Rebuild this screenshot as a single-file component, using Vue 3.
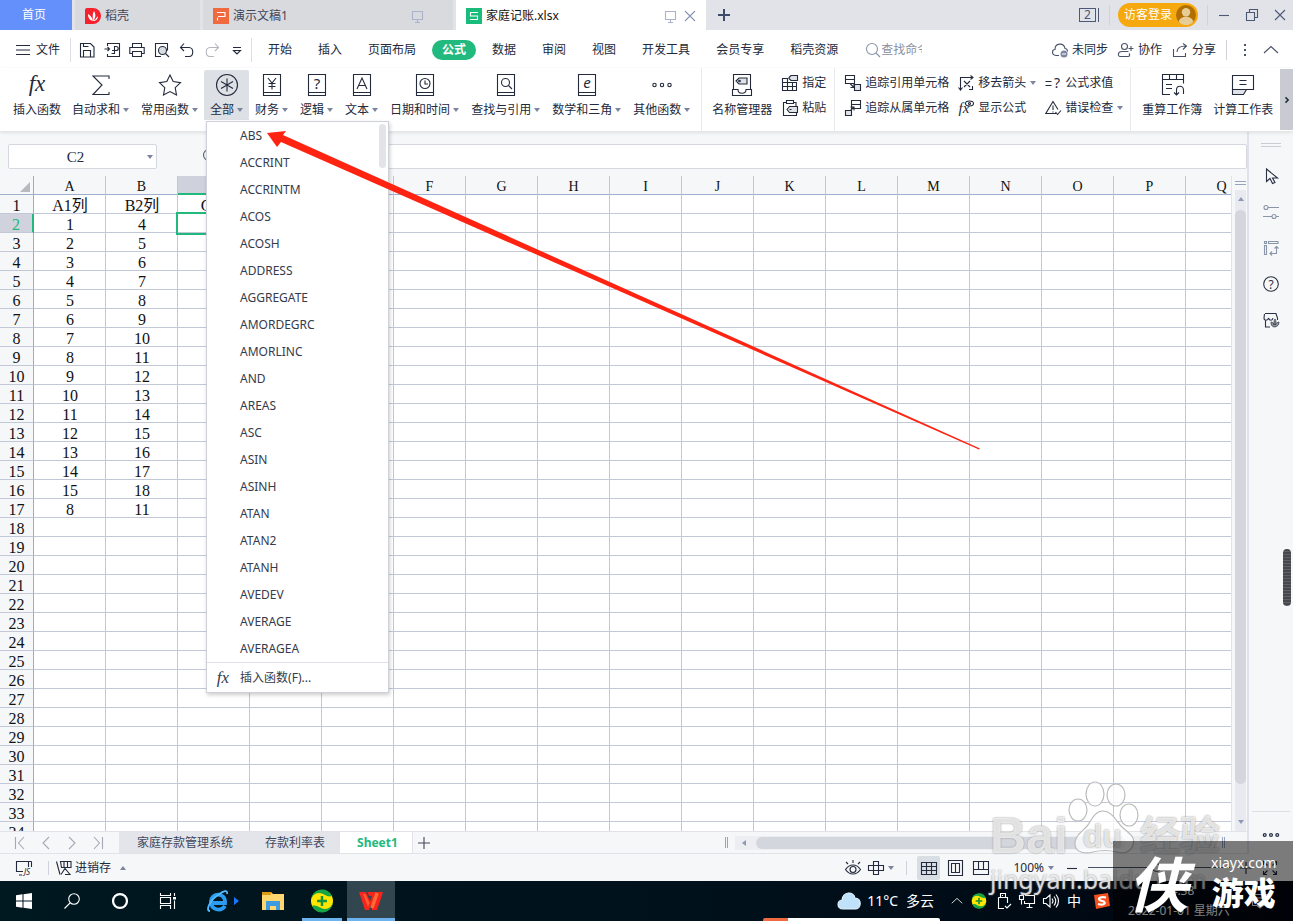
<script setup>
import { h, ref } from 'vue'

const cap = (x, y, s, t, extra = '') =>
  `<text x="${x}" y="${y}" font-size="${s}" text-anchor="middle" fill="currentColor" stroke="none" ${extra}>${t}</text>`
const book = '<path d="M3.5 1.5h17v21h-17zM3.5 19.5h17"/>'

const icons = {
  fx: [24, cap(12, 18, 23, 'fx', 'font-style="italic" font-family="Liberation Serif, serif"')],
  fxs: [16, cap(8, 13, 17, 'fx', 'font-style="italic" font-family="Liberation Serif, serif"')],
  sigma: [24, '<path d="M20 6V3H4l9 9-9 9.500h16V19"/>'],
  star: [24, '<path d="M12 2l3.200 6.600 7.300 1-5.300 5.100 1.300 7.200L12 18.500l-6.500 3.400 1.300-7.200L1.500 9.600l7.300-1z"/>'],
  all: [24, '<circle cx="12" cy="12" r="10.500"/><path d="M12 5.500v13M6 8.500l12 7M18 8.500l-12 7"/>'],
  money: [24, book + '<path d="M8 5l4 5 4-5M12 10v6.500M8.500 10.500h7M8.500 13.500h7"/>'],
  logic: [24, book + cap(12, 16, 15, '?')],
  text: [24, book + '<path d="M7 16l5-11 5 11M9 12.500h6"/>'],
  clock: [24, book + '<circle cx="12" cy="10.500" r="5"/><path d="M12 7.500v3.500h3"/>'],
  find: [24, book + '<circle cx="11.500" cy="9.500" r="4"/><path d="M14.500 12.500l3.500 3.500"/>'],
  math: [24, book + cap(12, 15, 15, 'e', 'font-style="italic"')],
  more: [24, '<circle cx="4.500" cy="12" r="1.700"/><circle cx="12" cy="12" r="1.700"/><circle cx="19.500" cy="12" r="1.700"/>'],
  names: [24, '<path d="M3.500 16V1.500h17V16M2.500 16.500H8c0 5 8 5 8 0h5.500v6h-19z"/><path fill="#dfe3e8" d="M6 8l3-3h8v6H9z"/><circle cx="9.500" cy="8" r=".8"/>'],
  assign: [16, '<path d="M6 3.500H.5v12h14V7M.5 7.500h14M.5 11.500h14M5.500 3.500v12M10.500 8v7.500"/><path fill="#dfe3e8" d="M7 2.500l2-2h6.500v5H9l-2-2z"/>'],
  paste: [16, '<path d="M4 2.500H1.500v13h13V13M12 2.500h2V6M4.500.5h7v3h-7z"/><path fill="#dfe3e8" d="M5 9.500l2.500-3h8v6h-8z"/><path d="M7.500 9.500h2"/>'],
  traceA: [16, '<path d="M.5.5h9v8h-9zM.5 4.500h9M5 8.500l4 4M9 9v3.500H5.500"/><path fill="#dfe3e8" d="M9.500 9.500h6v6h-6z"/>'],
  traceB: [16, '<path d="M6.500.5h9v8h-9zM6.500 4.500h9M4 12l5-5M5.500 7H9v3.500"/><path fill="#dfe3e8" d="M.5 10.500h6v5h-6z"/>'],
  removeArrow: [16, '<path d="M2.500 15V2.500H15M12.500.5l2.500 2-2.500 2M.5 12.500l2 2.500 2-2.500M6 6l6 6M12 6l-6 6M14.500 11v3.500H11"/>'],
  showF: [16, cap(6, 13, 15, 'fx', 'font-style="italic" font-family="Liberation Serif, serif"') + '<ellipse cx="11.500" cy="3.500" rx="4" ry="2.500"/><circle cx="11.500" cy="3.500" r="1"/>'],
  evalF: [16, '<path d="M.5 6.500h6M.5 10.500h6"/>' + cap(12, 13, 14, '?')],
  warn: [16, '<path d="M11 13.500H.8L8 1.500l5 8M8 5.500v4.500M8 11.500v1M10.500 12l2 2.500 3.500-4"/>'],
  recalcBook: [24, '<path d="M10 21.500H2.500v-20h21v9M2.500 6.500h21M9.500 1.500v5M16.500 1.500v5M6 11.500h6M6 15.500h6M23.500 21v-4c0-5-7-5-7 0v5M14 19.500l2.500 2.500 2.500-2.500"/>'],
  calcSheet: [24, '<path d="M1.500 2.500h21v14h-21zM8.500 7.500h7M8.500 11.500h7"/><path fill="#dfe3e8" d="M1.500 16.500h14l-3 5h-11z"/>'],
  save: [16, '<path d="M1.500 1.500h10l3.500 3.500v10h-13.500zM4.500 15V8.500h7V15M4.500 1.500v3h5"/>'],
  pdf: [16, '<path d="M3.500 4V1.500h12v13h-12V12M.5 7h5M3.500 5l2 2-2 2M7.500 11.500h3v-7h1.500c3 0 3 4 0 4H8"/>'],
  print: [16, '<path d="M3.500 5V1.500h9V5M3 11.500H.8V5.500h14.400v6H13M3.500 9.500h9v5h-9z"/>'],
  preview: [16, '<path d="M7 14.500H1.500v-13h12v7"/><circle cx="8.500" cy="8.500" r="4" fill="#d8dde4"/><path d="M11.500 11.500l3.500 3.500"/>'],
  undo: [16, '<path d="M5 1.500l-3.500 4 3.500 3.500M1.500 5.500H10c5 0 5 9 0 9H6"/>'],
  redo: [16, '<path d="M11 1.500l3.500 4L11 9M14.500 5.500H6c-5 0-5 9 0 9h4"/>'],
  qmore: [16, '<path d="M4 5.500h8M4.500 8.500L8 12l3.500-3.500z"/>'],
  search: [16, '<circle cx="7" cy="7" r="5.500"/><path d="M11 11l4 4"/>'],
  burger: [16, '<path d="M1 3.500h14M1 8h14M1 12.500h14"/>'],
  cloud: [16, '<path d="M7 13.500H4c-5-1-4-6-1-6 0-7 9-7 10-1 2 0 2.500 2 2.500 3"/><circle cx="12" cy="12" r="3.500" fill="#7c86a3" stroke="none"/><path d="M10 12h4" stroke="#fff"/>'],
  team: [16, '<circle cx="6.500" cy="4.500" r="3"/><path d="M10.500 9.500H4c-5 0-4 5-2 5h8c2 0 2-2 1-3M10.500 6.500h5M13 4v5"/>'],
  share: [16, '<path d="M1.500 7v7.500h12V11M5 10c0-4 3-6 9-6M11 1.500L14.500 4 11 7.500"/>'],
  dots: [16, '<path d="M8 2v2M8 7v2M8 12v2" stroke-width="2"/>'],
  up: [16, '<path d="M1 11l7-6.500 7 6.500"/>'],
  right: [16, '<path d="M6 4.500l3.500 3.500L6 11.500" stroke-width="2"/>'],
  plus: [16, '<path d="M8 2v12M2 8h12"/>'],
  screen: [16, '<path d="M3.500 3.500h10v8h-10zM8.500 11.500v3M6 14.500h5"/>'],
  close: [16, '<path d="M3 3l10 10M13 3L3 13"/>'],
  min: [16, '<path d="M3 8.500h10"/>'],
  restore: [16, '<path d="M2.500 5.500h8v8h-8zM5.500 5V2.500h8v8H11"/>'],
  docer: [16, '<path d="M8 0a8 8 0 010 16H0V2q0-2 2-2z" fill="#f5222d" stroke="none"/><path d="M8 13C4 12 3 9 3 6c2 1 4 3 5 7 0-4-1-6 1-10 2 3 2 7-1 10 2-1 3-3 5-5 0 3-2 5-5 5z" fill="#fff" stroke="none"/>'],
  ppt: [16, '<path d="M0 0h16v16H0z" fill="#f0693f" stroke="none"/><path d="M4.500 12.500v-3M4 4.500h8v4H5" stroke="#fff"/>'],
  et: [16, '<path d="M0 0h16v16H0z" fill="#1abc7b" stroke="none"/><path d="M12 4.500H4.500v3.500h7v3.500H4" stroke="#fff"/>'],
  first: [16, '<path d="M3.500 2v12M12 2L6.500 8l5.500 6"/>'],
  prev: [16, '<path d="M11 2L5 8l6 6"/>'],
  next: [16, '<path d="M5 2l6 6-6 6"/>'],
  last: [16, '<path d="M12.500 2v12M4 2l5.500 6L4 14"/>'],
  cursor: [16, '<path d="M3.500 1v12.500l3.500-3 2.500 5 2.500-1-2.500-4.500h5z"/>'],
  sliders: [16, '<circle cx="3" cy="3.500" r="2"/><path d="M5 3.500h11M0 12.500h9M13 12.500h3"/><circle cx="11" cy="12.500" r="2"/>'],
  pivot: [16, '<path d="M1.500 1.500h2v2h-2zM5.500 1.500h9.500v2H5.500zM1.500 5.500h2v9h-2zM13.500 7v6.500H7M11.500 8.500l2-2 2 2M9 11.500l-2 2 2 2"/>'],
  help: [16, '<circle cx="8" cy="8" r="7.300"/>' + cap(8, 12.500, 12, '?')],
  shop: [16, '<path d="M2.500 8v7H7M2 1.500h11l1.500 4.500v2M1.500 2L1 6c0 3 4 3 4.500 0 1 3 4 3 4.500 0"/><path d="M11 15c-3-1-3-3-3-5 2 0 3 2 3 3 0-2-.5-4 1-6 1.500 2 1 4 0 6 1-2 2-2.500 4-3 0 3-2 5-5 5z" fill="currentColor" fill-opacity=".5" stroke-width=".7"/>'],
  macro: [16, '<path d="M7 11.500H.5v-10h12M3 15h3M12.500 1.500V7M15.500 1.500V7M12.500 1.500h3"/>' + cap(11, 15, 8, 'JS', 'font-style="italic"')],
  stock: [16, '<path d="M.5 1.500l3.500 13M4.500 1.500H15v6H5.500zM8 1.500v6M11.500 1.500v6M5 14.500l4-6 2.500 3 2.500 3H9"/>'],
  eye: [16, '<path d="M.5 9.500c4-6 11-6 15 0-4 6-11 6-15 0zM8 0v3M1 2l2 2M15 2l-2 2"/><circle cx="8" cy="9.500" r="3"/>'],
  cross: [16, '<path d="M5.500 1.500h5v13h-5zM.5 5.500h15v5H.5z"/>'],
  vGrid: [16, '<path d="M.5 2.500h15v12H.5zM.5 6.500h15M.5 10.500h15M5.500 2.500v12M10.500 2.500v12"/>'],
  vPage: [16, '<path d="M1.500.5h14v15h-14zM4.500 3.500h8v9h-8zM8.500 3.500v9"/>'],
  vBreak: [16, '<path d="M.5 1.500h15v13H.5zM.5 9.500h10v-8M5.500 1.500v8M10.500 9.500h5"/>'],
  full: [16, '<path d="M1.500 5V1.500H5M11 1.500h3.500V5M14.500 11v3.500H11M5 14.500H1.500V11M1.500 1.500l4 4M14.500 1.500l-4 4M14.500 14.500l-4-4M1.500 14.500l4-4"/>'],
  win: [16, '<path d="M0 2.300l6.500-1v6.200H0zM7.500 1.200L16 0v7.500H7.500zM0 8.500h6.500v6.200l-6.500-1zM7.500 8.500H16V16l-8.500-1.200z" fill="#fff" stroke="none"/>'],
  tSearch: [16, '<circle cx="10" cy="6" r="5.300"/><path d="M6 10L.5 15.500"/>'],
  tRing: [16, '<circle cx="8" cy="8" r="6.200" stroke-width="2"/>'],
  tTask: [16, '<path d="M.5 0v2.500h10V0M.5 4.500h10v6H.5zM.5 16v-3.500h10V16M14.500 0v3M14.500 7.500V16"/><path d="M13 4h3v2.500h-3z" fill="#fff" stroke="none"/>'],
  ie: [24, '<path d="M20 17c-4 6-14 4-14-4 0-10 15-10 14 1H8" stroke="#2b9cf2" stroke-width="3.800"/><path d="M5 22c-5 0 0-11 8-16 5-4 10-6 9-1" stroke="#55bcff" stroke-width="1.800"/>'],
  folder: [24, '<path d="M1 3h9l2 2h11v16H1z" fill="#ffd76e" stroke="none"/><path d="M1 3h9v3H1z" fill="#dc9b12" stroke="none"/><path d="M5 21v-9h14v9h-4v-4H9v4z" fill="#3f9be0" stroke="none"/>'],
  safe: [24, '<circle cx="12" cy="12" r="11" fill="#ffe600" stroke="none"/><path d="M1 11A11 11 0 0122 7C17 9 14 4 9 4 5 4 2 7 1 11zM23 13A11 11 0 012 17C7 15 10 20 15 20 19 20 22 17 23 13z" fill="#15a547" stroke="none"/><path d="M12 7v10M7 12h10" stroke="#159339" stroke-width="2.500"/>'],
  wps: [24, '<path d="M0 3h7l4 9 2-5h-3l-1.500-4H24l-6 18h-5l-1-5-2 5H6z" fill="#f5251c" stroke="none"/><path d="M18 4l-5 15" stroke="#ff6a35" stroke-width="3.500"/><path d="M4 5h2.500l4 9-1.500 4z" fill="#ff5a30" stroke="none"/>'],
  weather: [24, '<path d="M6 20c-7 0-6-9-1-9 1-9 12-9 13-2 7 0 7 11 0 11z" fill="#bfe2fa" stroke="#e8f6ff"/>'],
  usb: [16, '<path d="M5.500.5h5v4h-5zM3.500 4.500h9V10M9 15.500H3.500v-11M7.500 2v1M10 13l2 2 4-4"/>'],
  net: [16, '<path d="M6 2.500h9.500v8h-10V8M10.500 10.500v4M7.500 14.500h6M.5 2.500h4v4h-4zM2.500 6.500v5"/>'],
  vol: [16, '<path d="M.5 5.500h2.500l4-3.500v12l-4-3.500H.5zM9 5.500q2 2.500 0 5M11 3.500q3.500 4.500 0 9M13 1.500q5 6.500 0 13"/>'],
  sogou: [16, '<path d="M0 2L14 0l2 13-14 3z" fill="#f4511e" stroke="none"/><path d="M12 4.500C4 3 3 7 8 8s3 5-4 3" stroke="#fff" stroke-width="2.200"/>'],
  notice: [16, '<path d="M.5 1.500h15v11H11L8 15l-3-2.500H.5zM3.500 5h9M3.500 8h9"/>'],
  user: [18, '<circle cx="9" cy="9" r="9" fill="#b06f00" stroke="none"/><circle cx="9" cy="6.500" r="3.800" fill="#e8cc96" stroke="none"/><path d="M2.500 15c1-6 12-6 13 0-3 4-10 4-13 0z" fill="#e8cc96" stroke="none"/>'],
}

const Ico = (props) =>
  h('svg', {
    viewBox: `0 0 ${icons[props.n][0]} ${icons[props.n][0]}`,
    width: props.s || icons[props.n][0],
    height: props.s || icons[props.n][0],
    fill: 'none',
    stroke: 'currentColor',
    'stroke-width': 1.1,
    'aria-hidden': 'true',
    innerHTML: icons[props.n][1],
  })
Ico.props = ['n', 's']

const quick = ['save', 'pdf', 'print', 'preview', 'undo', 'redo', 'qmore']
const menus = ['开始', '插入', '页面布局', '公式', '数据', '审阅', '视图', '开发工具', '会员专享', '稻壳资源']
const funcsBefore = [['fx', '插入函数', false], ['sigma', '自动求和', true], ['star', '常用函数', true]]
const funcsAfter = [
  ['money', '财务'], ['logic', '逻辑'], ['text', '文本'], ['clock', '日期和时间'],
  ['find', '查找与引用'], ['math', '数学和三角'], ['more', '其他函数'],
]
const functions = [
  'ABS', 'ACCRINT', 'ACCRINTM', 'ACOS', 'ACOSH', 'ADDRESS', 'AGGREGATE', 'AMORDEGRC', 'AMORLINC', 'AND',
  'AREAS', 'ASC', 'ASIN', 'ASINH', 'ATAN', 'ATAN2', 'ATANH', 'AVEDEV', 'AVERAGE', 'AVERAGEA',
]
const columns = 'ABCDEFGHIJKLMNOPQ'.split('')
const colA = ['A1列', 1, 2, 3, 4, 5, 6, 7, 8, 9, 10, 11, 12, 13, 14, 15, 8]
const colB = ['B2列', 4, 5, 6, 7, 8, 9, 10, 11, 12, 13, 14, 15, 16, 17, 18, 11]
const cell = (r, c) => (c === 'A' ? colA[r - 1] : c === 'B' ? colB[r - 1] : c === 'C' && r === 1 ? 'C列' : '')
const zoom = ref(48)
</script>

<template>
  <div class="app">
    <header class="title">
      <button class="home">首页</button>
      <button class="doc docer"><Ico n="docer" />稻壳</button>
      <button class="doc"><Ico n="ppt" />演示文稿1<Ico class="tail" n="screen" /></button>
      <div class="doc active"><Ico n="et" /><span>家庭记账.xlsx</span><Ico class="tail" n="screen" />
        <button aria-label="关闭标签"><Ico n="close" /></button></div>
      <button class="newtab" aria-label="新建"><Ico n="plus" /></button>
      <div class="winctl">
        <button class="count">2</button><i class="bar"></i>
        <button class="login">访客登录<Ico n="user" s="20" /></button><i class="bar"></i>
        <button aria-label="最小化"><Ico n="min" /></button>
        <button aria-label="还原"><Ico n="restore" /></button>
        <button aria-label="关闭"><Ico n="close" /></button>
      </div>
    </header>

    <nav class="menu">
      <button class="file"><Ico n="burger" />文件</button>
      <div class="quick">
        <button v-for="q in quick" :key="q" :class="q" :aria-label="q"><Ico :n="q" /></button>
      </div>
      <div class="menus">
        <button v-for="m in menus" :key="m" :class="{ on: m === '公式' }">{{ m }}</button>
      </div>
      <label class="find"><Ico n="search" /><input type="text" placeholder="查找命令" aria-label="查找命令" /></label>
      <div class="share">
        <button><Ico n="cloud" />未同步</button>
        <button><Ico n="team" />协作</button>
        <button><Ico n="share" />分享</button>
        <i class="bar"></i>
        <button aria-label="更多"><Ico n="dots" /></button>
        <button aria-label="收起"><Ico n="up" /></button>
      </div>
    </nav>

    <section class="ribbon">
      <div class="group funcs">
        <button v-for="f in funcsBefore" :key="f[1]" class="big"><Ico :n="f[0]" />
          <span>{{ f[1] }}<i v-if="f[2]" class="caret"></i></span></button>
        <div class="anchor">
          <button class="big pressed"><Ico n="all" /><span>全部<i class="caret"></i></span></button>
          <div class="dropdown">
            <ul>
              <li v-for="f in functions" :key="f"><button>{{ f }}</button></li>
            </ul>
            <button class="insert"><Ico n="fxs" />插入函数(F)...</button>
            <i class="dthumb"></i>
          </div>
        </div>
        <button v-for="f in funcsAfter" :key="f[1]" class="big"><Ico :n="f[0]" />
          <span>{{ f[1] }}<i class="caret"></i></span></button>
      </div>
      <div class="group manage">
        <button class="big"><Ico n="names" /><span>名称管理器</span></button>
        <div class="pair">
          <button><Ico n="assign" />指定</button>
          <button><Ico n="paste" />粘贴</button>
        </div>
      </div>
      <div class="group trace">
        <div class="pair">
          <button><Ico n="traceA" />追踪引用单元格</button>
          <button><Ico n="traceB" />追踪从属单元格</button>
        </div>
        <div class="pair">
          <button><Ico n="removeArrow" />移去箭头<i class="caret"></i></button>
          <button><Ico n="showF" />显示公式</button>
        </div>
        <div class="pair">
          <button><Ico n="evalF" />公式求值</button>
          <button><Ico n="warn" />错误检查<i class="caret"></i></button>
        </div>
      </div>
      <div class="group calc">
        <button class="big"><Ico n="recalcBook" /><span>重算工作簿</span></button>
        <button class="big"><Ico n="calcSheet" /><span>计算工作表</span></button>
      </div>
      <button class="scroller" aria-label="向右滚动"><Ico n="right" s="12" /></button>
    </section>

    <main class="work">
      <div class="book">
        <div class="fbar">
          <div class="namebox"><input type="text" value="C2" aria-label="名称框" /><i class="caret"></i></div>
          <Ico class="fzoom" n="search" />
          <input class="formula" type="text" aria-label="编辑栏" />
        </div>
        <div class="sheet">
          <div class="grid">
            <table>
              <thead>
                <tr>
                  <th class="corner"><i></i></th>
                  <th v-for="c in columns" :key="c" :class="{ sel: c === 'C' }">{{ c }}</th>
                </tr>
              </thead>
              <tbody>
                <tr v-for="r in 34" :key="r">
                  <th :class="{ rsel: r === 2 }">{{ r }}</th>
                  <td v-for="c in columns" :key="c" :class="{ cur: r === 2 && c === 'C' }">{{ cell(r, c) }}</td>
                </tr>
              </tbody>
            </table>
          </div>
          <div class="vscroll">
            <i class="split"></i>
            <div class="track"><i class="tri up"></i><i class="thumb"></i><i class="tri down"></i></div>
          </div>
        </div>
        <div class="tabs">
          <div class="navs">
            <button aria-label="第一张"><Ico n="first" /></button>
            <button aria-label="上一张"><Ico n="prev" /></button>
            <button aria-label="下一张"><Ico n="next" /></button>
            <button aria-label="最后一张"><Ico n="last" /></button>
          </div>
          <button class="stab">家庭存款管理系统</button>
          <button class="stab second">存款利率表</button>
          <button class="stab on">Sheet1</button>
          <button class="add" aria-label="新建工作表"><Ico n="plus" /></button>
          <div class="hscroll"><i class="vsplit"></i><div class="htrack"><i class="tri left"></i><i class="hthumb"></i></div><i class="vsplit"></i></div>
        </div>
      </div>
      <aside class="side">
        <i class="grip"></i>
        <button aria-label="选择"><Ico n="cursor" /></button>
        <button class="dim" aria-label="属性"><Ico n="sliders" /></button>
        <button class="dim" aria-label="透视表"><Ico n="pivot" /></button>
        <button aria-label="帮助"><Ico n="help" /></button>
        <button aria-label="稻壳"><Ico n="shop" /></button>
        <button class="last" aria-label="更多"><Ico n="more" s="20" /></button>
        <i class="pagebar"></i>
      </aside>
    </main>

    <div class="status">
      <button class="js" aria-label="宏"><Ico n="macro" /></button><i class="bar"></i>
      <button class="stock"><Ico n="stock" />进销存<i class="caret flip"></i></button>
      <div class="views">
        <button aria-label="护眼"><Ico n="eye" /></button>
        <button class="crossb" aria-label="阅读模式"><Ico n="cross" /><i class="caret"></i></button>
        <i class="bar"></i>
        <button class="view on" aria-label="普通"><Ico n="vGrid" /></button>
        <button class="view" aria-label="页面"><Ico n="vPage" /></button>
        <button class="view" aria-label="分页"><Ico n="vBreak" /></button>
        <button class="pct">100%<i class="caret"></i></button>
        <button aria-label="缩小"><Ico n="min" /></button>
        <input v-model="zoom" class="range" type="range" min="0" max="100" aria-label="缩放" />
        <button aria-label="放大"><Ico n="plus" /></button>
        <button class="full" aria-label="全屏"><Ico n="full" /></button>
      </div>
    </div>

    <footer class="taskbar">
      <button aria-label="开始"><Ico n="win" /></button>
      <button aria-label="搜索"><Ico n="tSearch" /></button>
      <button aria-label="Cortana"><Ico n="tRing" s="18" /></button>
      <button aria-label="任务视图"><Ico n="tTask" /></button>
      <button class="ie" aria-label="浏览器"><Ico n="ie" /><i class="bluetri"></i></button>
      <button aria-label="文件夹"><Ico n="folder" /></button>
      <button class="run" aria-label="安全卫士"><Ico n="safe" /></button>
      <button class="run cur" aria-label="WPS"><Ico n="wps" /></button>
      <div class="tray">
        <Ico n="weather" /><span class="temp">11°C</span><span class="sky">多云</span>
        <Ico n="up" s="12" /><Ico n="safe" s="16" /><Ico n="usb" /><Ico n="net" /><Ico n="vol" />
        <span class="ime">中</span><Ico n="sogou" />
        <div class="clock"><span>14:38</span><span>2022-01-01 星期六</span></div>
        <Ico class="notice" n="notice" />
      </div>
      <i class="toast"></i>
    </footer>

    <svg class="arrow" viewBox="0 0 720 320" width="720" height="320" aria-hidden="true">
      <path d="M2 3L21 1L18 5L715 318.500L714 319.500L16 12L12 17z" fill="#ff2312" />
    </svg>

    <div class="baidu">
      <svg viewBox="0 0 76 76" width="76" height="76" aria-hidden="true">
        <g fill="#fff" fill-opacity=".75" stroke="#bbb" stroke-width="1.200">
          <ellipse cx="26" cy="13" rx="9" ry="12" /><ellipse cx="47" cy="14" rx="9" ry="11" />
          <ellipse cx="9" cy="29" rx="9" ry="11" /><ellipse cx="60" cy="34" rx="9" ry="11" />
          <path d="M34 30c8 0 12 8 18 15 7 7 15 10 12 19-3 8-10 9-16 7-8-2-16-2-24 0-7 2-17 1-18-7-1-9 7-13 13-20 4-6 7-14 15-14z" />
        </g>
      </svg>
      <div class="brand"><b>Bai</b><b class="du">du</b><b class="exp">经验</b></div>
      <div class="url">jingyan.baidu.com</div>
    </div>
    <div class="xia">
      <b class="xa">侠</b>
      <div class="xb"><span>xiayx.com</span><b>游戏</b></div>
    </div>
  </div>
</template>

<style>
body { overflow: hidden; }
</style>

<style scoped>
* { box-sizing: border-box; }
.app {
  position: relative; display: flex; flex-direction: column; height: 100vh; overflow: hidden;
  font-family: "Noto Sans", "Noto Sans CJK SC", sans-serif; font-size: 12px; line-height: 18px; color: #232a3b; background: #f6f7f9;
}
button { font: inherit; color: inherit; background: none; border: 0; padding: 0; display: flex; align-items: center; white-space: nowrap; flex: none; }
input { font: inherit; color: inherit; outline: 0; }
svg { flex: none; display: block; overflow: visible; }
ul { list-style: none; margin: 0; padding: 0; }
.bar { width: 1px; height: 20px; background: #cfd2da; flex: none; }
.caret { display: inline-block; flex: none; border: 3px solid transparent; border-top: 4px solid #7b859e; border-bottom: 0; }
.caret.flip { border-top: 0; border-bottom: 4px solid #7b859e; }

.title { display: flex; height: 30px; flex: none; background: #e2e3e8; gap: 3px; color: #3f465a; }
.home { width: 72px; justify-content: center; padding-right: 4px; background: #6390fb; color: #fff; }
.doc { display: flex; align-items: center; width: 250px; padding: 1px 8px 0 10px; gap: 4px; background: #d9dade; }
.doc.docer { width: 125px; }
.doc .tail { margin-left: auto; color: #aab2cc; }
.doc:nth-child(3) .tail { margin-right: 20px; }
.doc.active { background: #fff; color: #111; gap: 4px; }
.doc.active button { color: #8a94b0; }
.newtab { margin-left: 7px; color: #3d4a6a; }
.newtab svg { stroke-width: 2; }
.winctl { display: flex; align-items: center; margin-left: auto; padding-right: 5px; color: #4b5876; }
.winctl > button { margin-right: 12px; }
.winctl > button:last-child { margin: 0; }
.winctl .count { width: 17px; height: 14px; justify-content: center; border: 1px solid #4b5876; box-shadow: 2px 0 #e2e3e8, 3px 0 #4b5876; margin-right: 13px; }
.winctl .login { height: 24px; margin: 0 9px 0 8px; padding: 0 2px 0 6px; gap: 4px; border-radius: 12px; background: #f6a90f; color: #fff; }
.winctl .bar + button { margin-left: 8px; }

.menu { display: flex; align-items: center; height: 38px; padding-top: 1px; flex: none; background: #fff; }
.file { width: 71px; height: 24px; padding-left: 15px; gap: 5px; border-right: 1px solid #dcdee4; }
.quick { display: flex; gap: 9px; padding: 0 6px 0 8px; height: 24px; border-right: 1px solid #dcdee4; }
.quick .redo { color: #b3b6bd; }
.menus { display: flex; padding-left: 3px; }
.menus button { padding: 0 13px; height: 20px; }
.menus .on { padding: 0 10px; margin: 0 3px; border-radius: 10px; background: #21b97d; color: #fff; font-weight: 700; }
.find { display: flex; align-items: center; margin-left: 14px; color: #8a94a8; }
.find input { width: 41px; border: 0; padding: 0; background: none; }
.find input::placeholder { color: #8a909e; opacity: 1; }
.share { display: flex; align-items: center; margin-left: auto; padding-right: 14px; gap: 10px; }
.share button { gap: 4px; }
.share svg { color: #4a5267; }

.ribbon { display: flex; height: 64px; flex: none; background: #fff; border-bottom: 1px solid #e6e7ea; box-shadow: 0 1px 3px #00000018; position: relative; z-index: 3; }
.group { display: flex; align-items: flex-start; padding: 2px 5px 0; border-right: 1px solid #e9eaee; flex: none; }
.funcs { padding-left: 7px; }
.manage { padding: 2px 4px 0; }
.big { flex-direction: column; padding: 3px 6px 0; height: 50px; gap: 4px; }
.funcs > .big:first-child { padding-left: 6px; padding-right: 5px; }
.big span { display: flex; align-items: center; gap: 3px; }
.big.pressed { background: #dde1e6; border-radius: 2px 2px 0 0; }
.pair { display: flex; flex-direction: column; padding: 0 4px; }
.pair button { height: 26px; gap: 4px; }
.pair button:first-child { height: 25px; }
.trace { padding-left: 6px; padding-right: 2px; }
.trace .pair { padding: 0 5px 0 4px; }
.calc { padding-right: 0; border-right: 0; }
.calc .big { padding-right: 5px; }
.scroller { margin-left: auto; width: 13px; height: 61px; margin-top: 1px; justify-content: center; background: #c9cbd2; }

.anchor { position: relative; }
.dropdown { position: absolute; top: 51px; left: 2px; width: 183px; background: #fff; border: 1px solid #ced1d8; box-shadow: 1px 2px 4px #0003; z-index: 5; color: #343b4c; }
.dropdown ul { border-bottom: 1px solid #dfe1e6; }
.dropdown li button { height: 27px; width: 100%; padding-left: 33px; }
.insert { height: 29px; width: 100%; padding-left: 8px; gap: 9px; }
.dthumb { position: absolute; top: 2px; right: 2px; width: 7px; height: 44px; border-radius: 4px; background: #e3e4e8; }

.work { display: flex; flex: 1; min-height: 0; }
.book { flex: 1; min-width: 0; display: flex; flex-direction: column; }
.fbar { display: flex; align-items: center; height: 44px; flex: none; padding: 4px 0 0 8px; }
.namebox { display: flex; align-items: center; width: 149px; height: 25px; padding: 2px 3px 0 0; background: #fff; border: 1px solid #d5d8de; border-radius: 2px; }
.namebox input { width: 100%; min-width: 0; border: 0; padding: 0 5px 0 0; background: none; text-align: center; font: 15px "Liberation Serif", serif; }
.fzoom { margin-left: 45px; color: #5b6272; }
.formula { flex: 1; margin-left: 30px; height: 25px; border: 1px solid #d5d8de; border-radius: 2px; background: #fff; }
.sheet { display: flex; flex: 1; min-height: 0; }
.grid { flex: 1; min-width: 0; overflow: hidden; }
table { border-collapse: separate; border-spacing: 0; table-layout: fixed; width: 1258px; font: 16px/15px "Liberation Serif", "Noto Sans CJK SC", serif; color: #111; }
th, td { padding: 3px 0 0; height: 19px; font-weight: 400; text-align: center; overflow: hidden; white-space: nowrap; border-right: 1px solid #c3c8d9; border-bottom: 1px solid #c3c8d9; }
td { background: #fff; width: 72px; padding-left: 1px; }
tr > th:first-child { width: 34px; border-right-color: #9fabc9; background: #f6f7f9; }
thead th { height: 19px; width: 72px; font-size: 14px; background: #f6f7f9; border-bottom-color: #9fb0cf; }
thead .sel { background: #cfd2dc; border-bottom: 2px solid #21b97d; padding-top: 2px; }
thead .corner { padding: 0; }
.corner i { display: block; margin: 3px 3px 0 20px; border-left: 10px solid transparent; border-bottom: 10px solid #b9babd; }
tr > th.rsel:first-child { background: #d0d3dd; color: #21b97d; border-right: 2px solid #21b97d; }
td.cur { box-shadow: 0 0 0 2px #21b97d; position: relative; }
.vscroll { width: 16px; flex: none; border-left: 1px solid #e1e3ea; padding: 5px 1px 0 3px; display: flex; flex-direction: column; }
.split { height: 4px; border: solid #98a3be; border-width: 1px 0; margin-bottom: 5px; }
.track { flex: 1; display: flex; flex-direction: column; align-items: center; background: #e8eaf0; padding: 7px 0 7px; }
.tri { border: 3px solid transparent; }
.tri.up { border-top: 0; border-bottom: 4px solid #8d98b8; }
.tri.down { border-bottom: 0; border-top: 4px solid #8d98b8; margin-top: 36px; }
.tri.left { border-left: 0; border-right: 4px solid #8d98b8; }
.thumb { flex: 1; width: 11px; margin-top: 9px; border-radius: 6px; background: #d4d6de; }

.tabs { display: flex; height: 23px; flex: none; border-top: 1px solid #e1e3e9; border-bottom: 1px solid #e1e3e9; color: #3f4759; }
.navs { display: flex; gap: 10px; width: 119px; padding-left: 12px; color: #a4a9b5; flex: none; }
.stab { padding: 0 16px 0 18px; background: #e4e5eb; }
.stab.second { padding: 0 15px 0 16px; }
.stab.on { padding: 0 14px 0 17px; background: #fff; color: #21b97d; font-weight: 700; }
.add { padding: 0 4px 0 3px; border-left: 1px solid #e1e3e9; }
.hscroll { display: flex; align-items: center; width: 522px; margin-left: auto; gap: 7px; padding-right: 22px; }
.vsplit { width: 3px; height: 11px; border: solid #98a3be; border-width: 0 1px; flex: none; }
.htrack { display: flex; align-items: center; flex: 1; height: 14px; padding-left: 7px; gap: 10px; background: #eceef2; }
.hthumb { width: 370px; height: 12px; border-radius: 6px; background: #d4d6de; }

.side { position: relative; width: 46px; flex: none; border-left: 2px solid #e0e2ea; display: flex; flex-direction: column; align-items: center; color: #2a3144; }
.side button { height: 36px; }
.side .dim { color: #8b95a8; }
.grip { width: 20px; height: 4px; margin: 11px 0 11px; border: solid #c9ccd2; border-width: 1px 0; }
.side .last { width: 38px; height: 43px; margin-top: auto; padding-top: 4px; justify-content: center; border-top: 1px solid #dcdfe5; }
.side .last svg { stroke-width: 1.5; }
.pagebar { position: absolute; right: 2px; top: 417px; width: 8px; height: 57px; border-radius: 4px; background: repeating-linear-gradient(#47484c 0 2px, #606166 2px 3px); }

.status { display: flex; align-items: center; height: 27px; flex: none; padding-left: 16px; }
.status .bar { height: 14px; }
.js { margin-right: 16px; }
.stock { margin-left: 7px; gap: 3px; }
.stock .caret { margin-left: 6px; }
.views { display: flex; align-items: center; margin-left: auto; padding-right: 15px; }
.crossb { margin: 0 12px 0 7px; gap: 4px; }
.view { width: 23px; height: 24px; margin-left: 3px; justify-content: center; border-radius: 2px; }
.bar + .view { margin-left: 10px; }
.view.on { background: #d9dde4; }
.pct { margin: 0 10px 0 21px; gap: 4px; }
.range { appearance: none; width: 142px; height: 16px; margin: 0 8px; background: linear-gradient(#4a5267, #4a5267) center / 100% 1px no-repeat; }
.range::-webkit-slider-thumb { appearance: none; width: 9px; height: 9px; border: 1px solid #2a3144; border-radius: 50%; background: #fff; }
.full { margin-left: 8px; }

.taskbar { position: relative; display: flex; height: 40px; flex: none; background: linear-gradient(90deg, #001820, #00101b 60%, #00050f); color: #fff; }
.taskbar > button { width: 48px; justify-content: center; }
.taskbar > .ie { width: 57px; padding-left: 2px; gap: 5px; }
.bluetri { border: 4px solid transparent; border-left: 5px solid #1677ff; border-right: 0; }
.taskbar > .run { width: 40px; margin-left: 5px; border-bottom: 3px solid #6cb2ec; padding-top: 3px; }
.taskbar > .run.cur { width: 48px; background: #32464f; }
.tray { display: flex; align-items: center; margin-left: auto; gap: 8px; }
.temp { font-size: 14px; }
.sky { font-size: 14px; margin-right: 9px; }
.tray svg:first-child { margin-right: -2px; }
.ime { font-size: 14px; margin-right: 5px; }
.clock { display: flex; flex-direction: column; align-items: center; width: 130px; line-height: 20px; margin-left: -4px; }
.notice { margin: 0 25px 0 0; }
.toast { position: absolute; left: 763px; bottom: 0; width: 177px; height: 3px; border-left: 25px solid #f0693f; border-radius: 2px 2px 0 0; background: #fff; }

.arrow { position: absolute; left: 265px; top: 130px; z-index: 10; pointer-events: none; }
.baidu { position: absolute; right: 69px; bottom: 26px; width: 234px; height: 114px; z-index: 8; pointer-events: none; color: #ffffffbf; text-shadow: 0 0 2px #888; }
.baidu svg { position: absolute; left: 79px; top: 0; }
.brand { position: absolute; left: 0; top: 27px; display: flex; align-items: center; line-height: 56px; font-family: "Liberation Sans", "Noto Sans CJK SC", sans-serif; font-size: 50px; }
.brand .du { margin-left: 15px; font-size: 32px; }
.brand .exp { margin-left: 18px; font-size: 40px; }
.url { position: absolute; left: 0; bottom: 0; font-size: 25px; line-height: 32px; }
.xia { position: absolute; right: 0; bottom: 0; width: 180px; height: 80px; z-index: 9; display: flex; align-items: center; background: #00000080; color: #fff; pointer-events: none; font-family: "Noto Sans CJK SC", sans-serif; }
.xa { width: 98px; padding-right: 8px; text-align: center; font-size: 60px; line-height: 76px; font-style: italic; font-weight: 700; }
.xb { display: flex; flex-direction: column; align-items: center; line-height: 36px; font-weight: 900; font-size: 32px; }
.xb span { font: 14px/20px "Noto Sans", sans-serif; }
</style>
